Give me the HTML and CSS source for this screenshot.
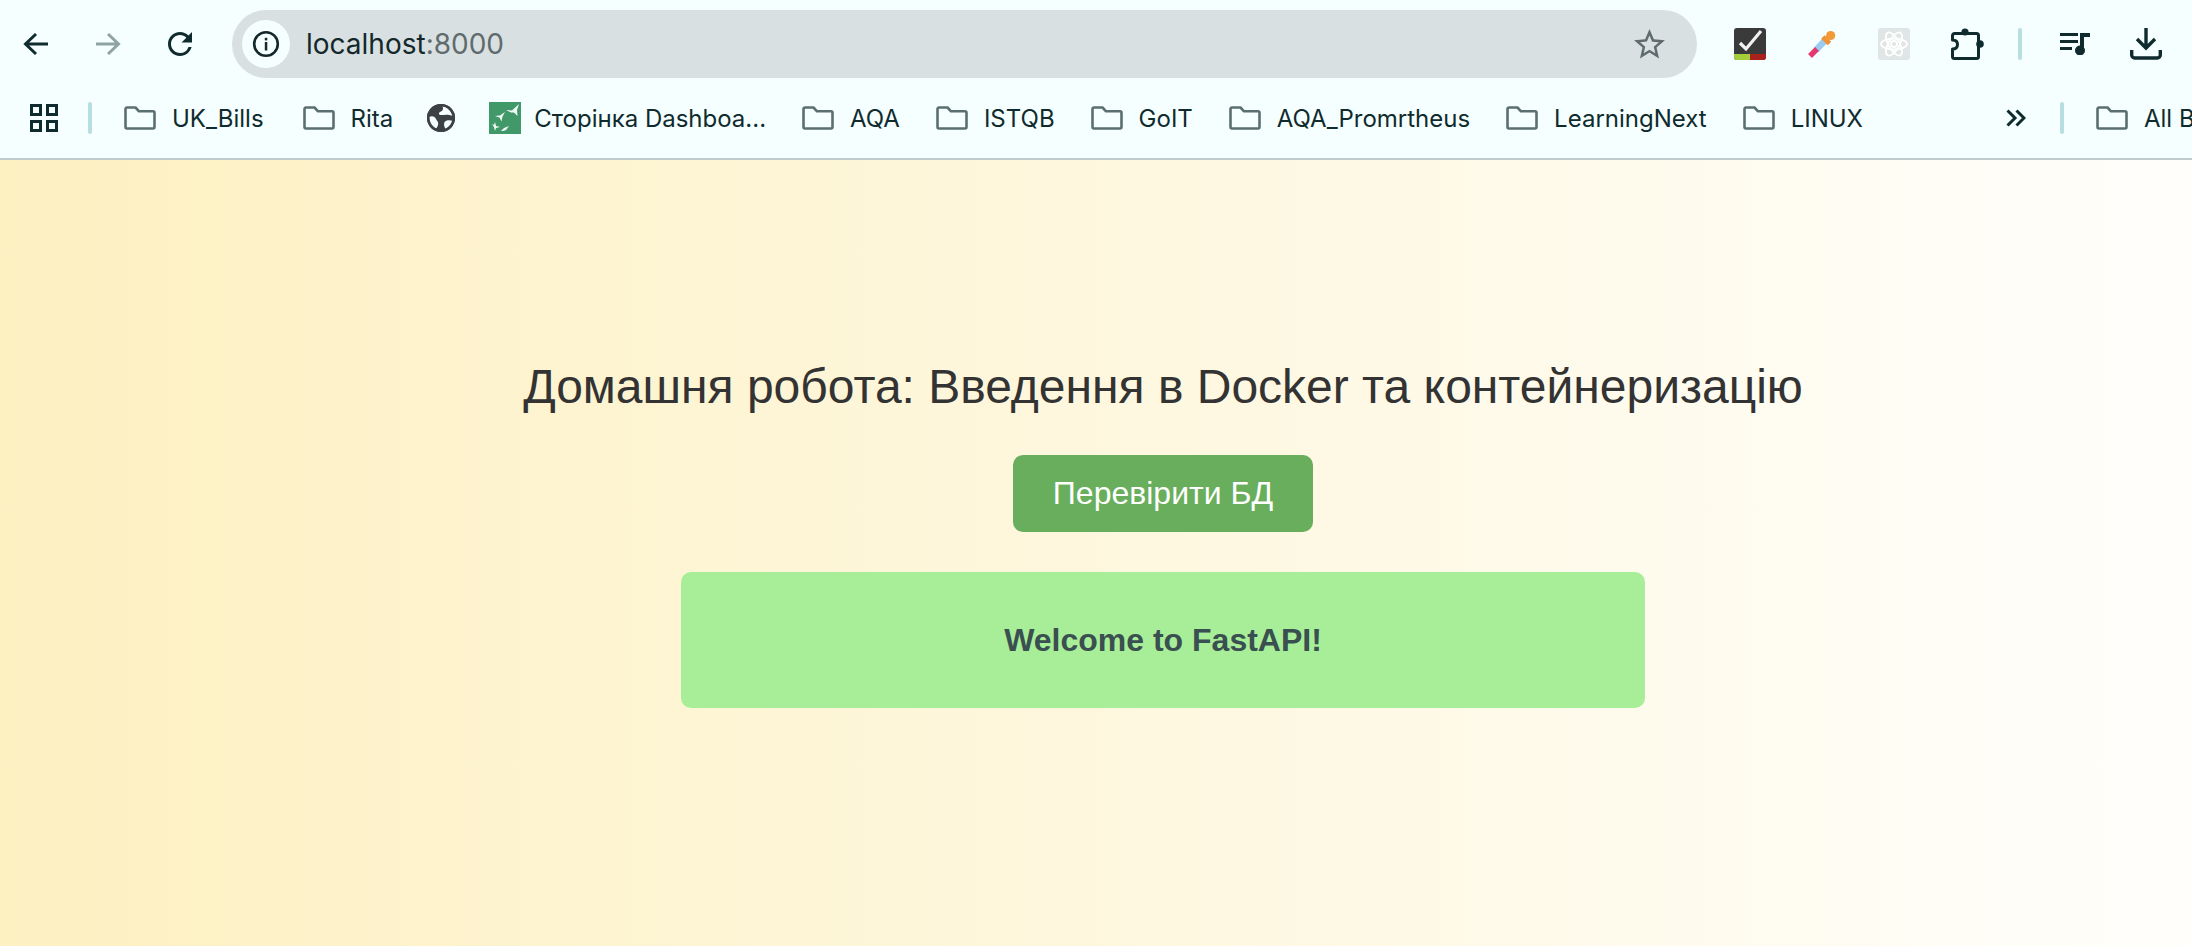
FILE: index.html
```html
<!DOCTYPE html>
<html lang="en">
<head>
    <meta charset="UTF-8">
    <title>localhost:8000</title>
    <link rel="stylesheet" href="styles.css">
</head>
<body>
    <svg class="defs" width="0" height="0">
        <symbol id="folder" viewBox="0 0 32 24">
            <path d="M3 1.500h8.500l3.500 3.800h14a1.500 1.500 0 0 1 1.500 1.500v14.200a1.500 1.500 0 0 1-1.500 1.500H3a1.500 1.500 0 0 1-1.500-1.500V3A1.500 1.500 0 0 1 3 1.500z" fill="none" stroke="#5b6f70" stroke-width="2.600" stroke-linejoin="round"/>
        </symbol>
    </svg>

    <header class="browser">
        <div class="toolbar">
            <div class="tool-button">
                <svg width="26" height="24" viewBox="0 0 26 24"><path d="M25 12H3M13 2 2.500 12 13 22" fill="none" stroke="#0f2b2e" stroke-width="3"/></svg>
            </div>
            <div class="tool-button">
                <svg width="26" height="24" viewBox="0 0 26 24"><path d="M1 12h22M13 2l10.500 10L13 22" fill="none" stroke="#8fa3a3" stroke-width="3"/></svg>
            </div>
            <div class="tool-button">
                <svg width="36" height="36" viewBox="0 0 24 24"><path d="M17.650 6.350A7.958 7.958 0 0 0 12 4c-4.420 0-7.990 3.580-7.990 8s3.570 8 7.990 8c3.730 0 6.840-2.550 7.730-6h-2.080A5.990 5.990 0 0 1 12 18c-3.310 0-6-2.690-6-6s2.690-6 6-6c1.660 0 3.140.690 4.220 1.780L13 11h7V4l-2.350 2.350z" fill="#0f2b2e"/></svg>
            </div>

            <div class="omnibox">
                <div class="site-info">
                    <svg width="28" height="28" viewBox="0 0 28 28">
                        <circle cx="14" cy="14" r="11.800" fill="none" stroke="#14282b" stroke-width="2.600"/>
                        <rect x="12.800" y="12" width="2.500" height="8.500" fill="#14282b"/>
                        <rect x="12.800" y="7.800" width="2.500" height="2.600" fill="#14282b"/>
                    </svg>
                </div>
                <span class="url">localhost<span class="url-port">:8000</span></span>
                <svg class="star" width="37" height="37" viewBox="0 0 24 24"><path d="M22 9.240l-7.190-.620L12 2 9.190 8.630 2 9.240l5.460 4.730L5.820 21 12 17.270 18.180 21l-1.630-7.030L22 9.240zM12 15.400l-3.760 2.270 1-4.280-3.320-2.880 4.380-.380L12 6.100l1.710 4.040 4.380.380-3.320 2.880 1 4.280L12 15.400z" fill="#5f6b6c"/></svg>
            </div>

            <div class="tool-button">
                <svg width="32" height="32" viewBox="0 0 32 32">
                    <rect width="32" height="32" rx="3" fill="#3b3a3b"/>
                    <path d="M0 26h16v6H3a3 3 0 0 1-3-3z" fill="#a6cd3c"/>
                    <path d="M16 26h16v3a3 3 0 0 1-3 3H16z" fill="#a8211a"/>
                    <path d="M6 15l6 6L27 3" fill="none" stroke="#f2f2f2" stroke-width="3.200"/>
                </svg>
            </div>
            <div class="tool-button">
                <svg width="32" height="32" viewBox="0 0 32 32" fill="none">
                    <path d="M19 12.500 10 22" stroke="#9ccbf1" stroke-width="6.500"/>
                    <path d="M11 21 4 28" stroke="#e2386d" stroke-width="5.500"/>
                    <path d="M16.800 9 23.500 15.500" stroke="#ee9234" stroke-width="5"/>
                    <circle cx="24.700" cy="7.500" r="4.600" fill="#f29a38"/>
                    <path d="M21 8 24 11" stroke="#f29a38" stroke-width="6"/>
                </svg>
            </div>
            <div class="tool-button">
                <svg width="32" height="32" viewBox="0 0 32 32">
                    <rect width="32" height="32" rx="3" fill="#dfe6e5"/>
                    <g fill="none" stroke="#fff" stroke-width="1.800">
                        <ellipse cx="16" cy="16" rx="13" ry="5.500"/>
                        <ellipse cx="16" cy="16" rx="13" ry="5.500" transform="rotate(60 16 16)"/>
                        <ellipse cx="16" cy="16" rx="13" ry="5.500" transform="rotate(120 16 16)"/>
                        <circle cx="16" cy="16" r="3"/>
                    </g>
                </svg>
            </div>
            <div class="tool-button tool-button-puzzle">
                <svg width="34" height="32" viewBox="0 0 34 32">
                    <path d="M3.500 5.500h22a2 2 0 0 1 2 2v21a2 2 0 0 1-2 2h-22a2 2 0 0 1-2-2V21c3.500 0 5-2 5-4.500s-1.500-4.500-5-4.500V7.500a2 2 0 0 1 2-2z" fill="none" stroke="#0f2b2e" stroke-width="3" stroke-linejoin="round"/>
                    <circle cx="14" cy="4" r="3.600" fill="#0f2b2e"/>
                    <circle cx="29" cy="16" r="3.800" fill="#0f2b2e"/>
                </svg>
            </div>
            <div class="separator toolbar-separator"></div>
            <div class="tool-button">
                <svg width="30" height="22" viewBox="0 0 30 22" fill="#0f2b2e">
                    <rect y="0" width="18" height="3"/>
                    <rect y="7" width="18" height="3"/>
                    <rect y="14" width="12" height="3"/>
                    <path d="M20 0h10v4h-6v14h-4z"/>
                    <circle cx="20" cy="17.500" r="5"/>
                </svg>
            </div>
            <div class="tool-button tool-button-last">
                <svg width="32" height="32" viewBox="0 0 32 32">
                    <path d="M16 0v19M7 11l9 9 9-9" fill="none" stroke="#0f2b2e" stroke-width="3.400"/>
                    <path d="M1.700 22v5a3 3 0 0 0 3 3h22.600a3 3 0 0 0 3-3v-5" fill="none" stroke="#0f2b2e" stroke-width="3.400"/>
                </svg>
            </div>
        </div>

        <nav class="bookmarks">
            <svg class="apps" width="28" height="28" viewBox="0 0 28 28" fill="none" stroke="#0f2b2e" stroke-width="3">
                <rect x="1.500" y="1.500" width="9" height="9"/>
                <rect x="17.500" y="1.500" width="9" height="9"/>
                <rect x="1.500" y="17.500" width="9" height="9"/>
                <rect x="17.500" y="17.500" width="9" height="9"/>
            </svg>
            <div class="separator bookmarks-separator"></div>

            <a class="bookmark bookmark-first"><svg class="folder"><use href="#folder"/></svg>UK_Bills</a>
            <a class="bookmark"><svg class="folder"><use href="#folder"/></svg>Rita</a>
            <a class="bookmark bookmark-icon">
                <svg width="28" height="28" viewBox="0 0 28 28">
                    <circle cx="14" cy="14" r="14" fill="#3c4145"/>
                    <path d="M15 2c2 2 1 5-2 6-2 1-1 3 1 3 3 0 7-1 12 1-.500-5-5-10-11-10z" fill="#f6ffff"/>
                    <path d="M2 13c3-1.500 6-.500 7 2 1 2 3 3.500 2 6-.500 2-1.500 3-2.500 4C4 23 2 18 2 13z" fill="#f6ffff"/>
                    <path d="M18 17.500c2-1.500 5-1.500 8-.500-1 3.500-4 7-7.500 8-1-2-2.500-5-.500-7.500z" fill="#f6ffff"/>
                    <circle cx="14" cy="14" r="12.700" fill="none" stroke="#3c4145" stroke-width="2.600"/>
                </svg>
            </a>
            <a class="bookmark bookmark-favicon">
                <svg width="32" height="32" viewBox="0 0 32 32">
                    <rect width="32" height="32" fill="#41996a"/>
                    <g fill="#f3fbf6">
                        <path d="M17 8l6 .500 7-6.500-2 6 .500 6-3.500-3.500-3 0z"/>
                        <path d="M6 14l5-.500 5-3.500-2.500 4.500-1 5-2-4z"/>
                        <path d="M3 22l2 1 1-3 1 4 4 1-4 1-1 3-1-4z"/>
                        <path d="M12 29l3-3 5-2-3 4-3 1z"/>
                    </g>
                </svg>Сторінка Dashboa...
            </a>
            <a class="bookmark"><svg class="folder"><use href="#folder"/></svg>AQA</a>
            <a class="bookmark"><svg class="folder"><use href="#folder"/></svg>ISTQB</a>
            <a class="bookmark"><svg class="folder"><use href="#folder"/></svg>GoIT</a>
            <a class="bookmark"><svg class="folder"><use href="#folder"/></svg>AQA_Promrtheus</a>
            <a class="bookmark"><svg class="folder"><use href="#folder"/></svg>LearningNext</a>
            <a class="bookmark"><svg class="folder"><use href="#folder"/></svg>LINUX</a>

            <svg class="chevrons" width="20" height="18" viewBox="0 0 20 18" fill="none" stroke="#0f2b2e" stroke-width="3">
                <path d="M1.500 1.500 9 9l-7.500 7.500M10.500 1.500 18 9l-7.500 7.500"/>
            </svg>
            <div class="separator overflow-separator"></div>
            <a class="bookmark"><svg class="folder"><use href="#folder"/></svg>All Bookmarks</a>
        </nav>
    </header>

    <main class="page">
        <h1>Домашня робота: Введення в Docker та контейнеризацію</h1>
        <button class="check-button">Перевірити БД</button>
        <div class="message">Welcome to FastAPI!</div>
    </main>
</body>
</html>
```

FILE: styles.css
```css
/* Browser frame */
html, body {
    margin: 0;
    height: 100%;
    overflow: hidden;
}

body {
    display: flex;
    flex-direction: column;
    font-family: "Liberation Sans", Arial, sans-serif;
}

.defs {
    position: absolute;
}

.browser {
    flex: none;
    height: 158px;
    background-color: #f6ffff;
    border-bottom: 2px solid #c0cdce;
    font-family: Inter, "Noto Sans", sans-serif;
    color: #0f2b2e;
}

.toolbar {
    display: flex;
    align-items: center;
    height: 88px;
}

.tool-button {
    display: flex;
    flex: none;
    align-items: center;
    justify-content: center;
    width: 72px;
    height: 68px;
}

.tool-button-puzzle {
    margin-left: 2px;
}

.tool-button-last {
    width: 70px;
}

.omnibox {
    display: flex;
    flex: none;
    align-items: center;
    width: 1465px;
    height: 68px;
    margin: 0 17px 0 16px;
    border-radius: 34px;
    background-color: #d8e0e1;
    box-sizing: border-box;
    padding: 0 12px 0 10px;
}

.site-info {
    display: flex;
    align-items: center;
    justify-content: center;
    width: 48px;
    height: 48px;
    border-radius: 50%;
    background-color: #f6ffff;
}

.url {
    margin-left: 16px;
    font-size: 28px;
    color: #14282b;
}

.url-port {
    color: #5f6b6c;
}

.star {
    margin-left: auto;
    margin-right: 17px;
}

.separator {
    flex: none;
    width: 4px;
    height: 32px;
    border-radius: 2px;
    background-color: #b9dedf;
}

.toolbar-separator {
    margin: 0 17px 0 14px;
}

.bookmarks {
    display: flex;
    align-items: center;
    box-sizing: border-box;
    height: 70px;
    padding: 0 0 10px 30px;
    white-space: nowrap;
    overflow: hidden;
}

.apps {
    flex: none;
}

.bookmarks-separator {
    margin: 0 14px 0 30px;
}

.bookmark {
    display: flex;
    flex: none;
    align-items: center;
    gap: 16px;
    padding: 0 18px;
    font-size: 24px;
}

.bookmark-first {
    padding-right: 21px;
}

.bookmark-icon {
    padding: 0 16px;
}

.bookmark-favicon {
    gap: 13px;
}

.folder {
    width: 32px;
    height: 24px;
}

.chevrons {
    flex: none;
    margin-left: 125px;
}

.overflow-separator {
    margin: 0 14px 0 34px;
}

/* Page content */
.page {
    flex: 1;
    display: flex;
    flex-direction: column;
    align-items: center;
    padding: 198px 0 0 134px;
    background: linear-gradient(to right, #fdf0c1, #ffffff 106%);
    color: #333;
}

h1 {
    margin: 0 0 40px;
    font-size: 48px;
    font-weight: 400;
    line-height: 57px;
    white-space: nowrap;
}

.check-button {
    width: 300px;
    height: 77px;
    margin-bottom: 40px;
    border: none;
    border-radius: 10px;
    background-color: #68ae5c;
    color: #fff;
    font-family: inherit;
    font-size: 32px;
}

.message {
    width: 964px;
    padding: 48px 0;
    border-radius: 10px;
    background-color: #a8ee98;
    color: #3a4f50;
    font-size: 32px;
    font-weight: 700;
    line-height: 40px;
    text-align: center;
}
```
